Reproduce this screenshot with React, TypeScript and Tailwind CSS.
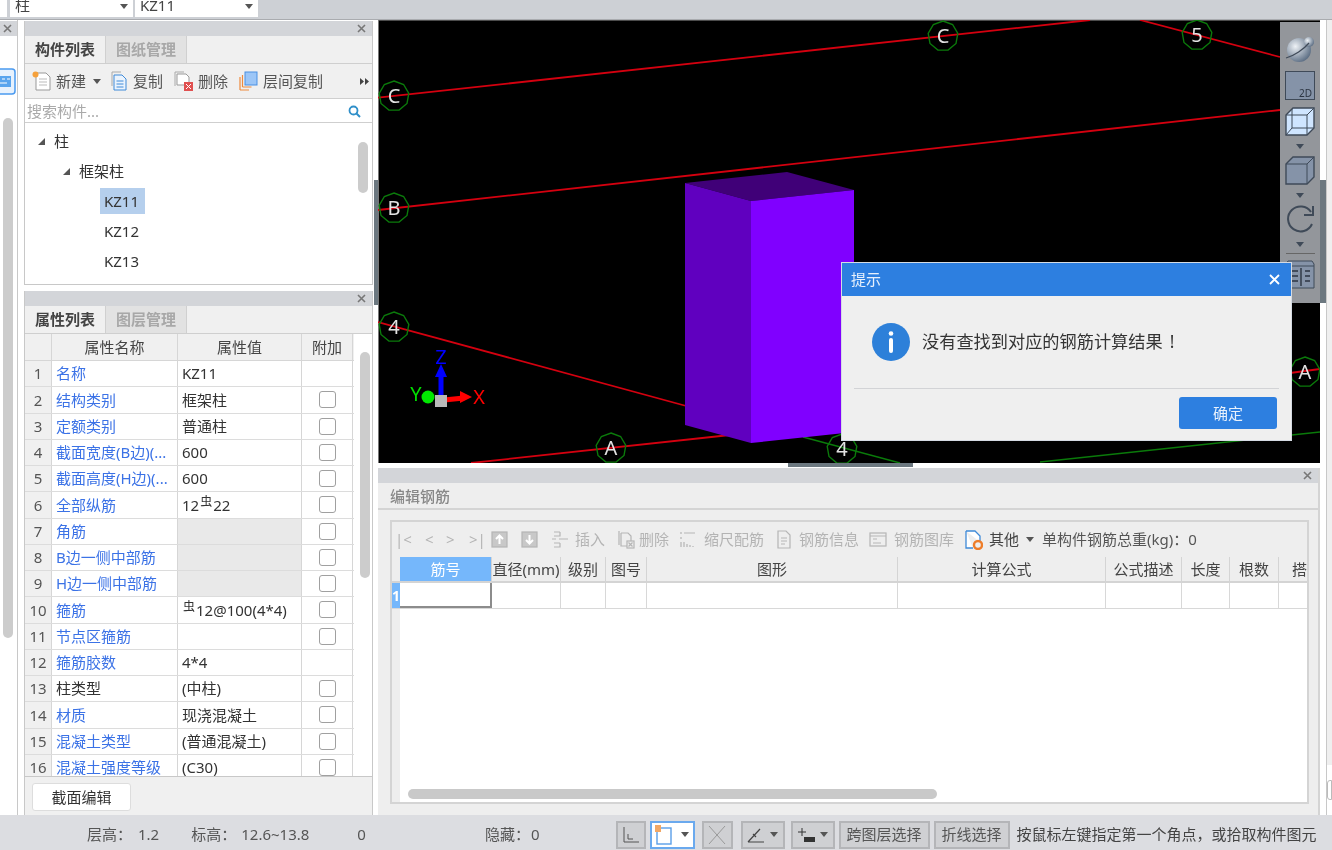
import type React from "react"

const fontStack = "[font-family:'Noto_Sans','Noto_Sans_CJK_SC',sans-serif]"

const Caret = ({ className = "" }: { className?: string }) => (
    <svg width="8" height="5" viewBox="0 0 8 5" className={className}><path d="M0 0h8L4 5z" fill="#555" /></svg>
)

const CloseBar = ({ className = "" }: { className?: string }) => (
    <div className={`h-[15px] bg-[#d3d5d9] flex items-center justify-end shrink-0 ${className}`}>
        <svg width="9" height="9" viewBox="0 0 9 9" className="mr-[6px]"><path d="M1 1l7 7M8 1L1 8" stroke="#777" strokeWidth="1.6" /></svg>
    </div>
)

const Tabs = ({ active, other }: { active: string, other: string }) => (
    <div className="h-[28px] flex bg-[#f0f0f0] border-b border-[#cfcfcf] shrink-0 font-bold">
        <div className="w-[80px] flex items-center justify-center text-[#444]">{active}</div>
        <div className="w-[82px] flex items-center justify-center text-[#a8a8a8] bg-[#e2e2e2] border-x border-[#d0d0d0]">{other}</div>
    </div>
)

// icons for the component list toolbar
const NewIcon = () => (
    <svg width="19" height="20" viewBox="0 0 19 20" className="shrink-0">
        <path d="M4 2h10l4 4v13H4z" fill="#fff" stroke="#999" />
        <path d="M7 8h8M7 11h8M7 14h8" stroke="#bbb" />
        <circle cx="3.5" cy="3.5" r="3" fill="#f5a13c" />
    </svg>
)
const CopyIcon = () => (
    <svg width="16" height="20" viewBox="0 0 16 20" className="shrink-0">
        <path d="M1 1h9M1 1v14" stroke="#aaa" fill="none" />
        <path d="M3 4h8l4 4v11H3z" fill="#eaf3fd" stroke="#3f8ad8" />
        <path d="M5.5 10h7M5.5 13h7M5.5 16h7" stroke="#3f8ad8" />
    </svg>
)
const DeleteIcon = () => (
    <svg width="19" height="20" viewBox="0 0 19 20" className="shrink-0">
        <path d="M1 1h9M1 1v14" stroke="#aaa" fill="none" />
        <path d="M3 3h9l3 3v8H3v-11z" fill="#fff" stroke="#999" />
        <rect x="10" y="11" width="9" height="9" fill="#e05050" />
        <path d="M12 13l5 5M17 13l-5 5" stroke="#fff" />
    </svg>
)
const FloorCopyIcon = () => (
    <svg width="19" height="20" viewBox="0 0 19 20" className="shrink-0">
        <path d="M1 19V6M1 19h9M3.5 16V4M3.5 16h9" stroke="#ee8a3c" strokeWidth="1.2" fill="none" />
        <rect x="6" y="1" width="12" height="13" fill="#9cc6f7" stroke="#4a90e2" />
    </svg>
)

const TreeArrow = () => (
    <svg width="7" height="7" viewBox="0 0 7 7" className="shrink-0"><path d="M7 0v7H0z" fill="#555" /></svg>
)

const ComponentPanel = () => (
    <div className="h-[264px] flex flex-col border border-t-0 border-[#c8c8c8] bg-white shrink-0">
        <CloseBar />
        <Tabs active="构件列表" other="图纸管理" />
        <div className="h-[35px] bg-[#f0f0f0] border-b border-[#cfcfcf] flex items-center text-[#555] shrink-0">
            <div className="ml-[7px]"><NewIcon /></div>
            <span className="ml-[5px]">新建</span>
            <Caret className="ml-[7px]" />
            <div className="ml-[10px]"><CopyIcon /></div>
            <span className="ml-[6px]">复制</span>
            <div className="ml-[11px]"><DeleteIcon /></div>
            <span className="ml-[5px]">删除</span>
            <div className="ml-[11px]"><FloorCopyIcon /></div>
            <span className="ml-[5px]">层间复制</span>
            <svg width="9" height="7" viewBox="0 0 9 7" className="ml-[37px]"><path d="M0 0l4 3.5L0 7zM5 0l4 3.5L5 7z" fill="#444" /></svg>
        </div>
        <div className="h-[24px] border-b border-[#cfcfcf] flex items-center justify-between px-[2px] pt-[2px] text-[#aaa] shrink-0">
            <span>搜索构件...</span>
            <svg width="13" height="13" viewBox="0 0 13 13" className="mr-[9px]"><circle cx="5.5" cy="5.5" r="4" fill="none" stroke="#2f8fc9" strokeWidth="1.8" /><path d="M8.5 8.5l3.5 3.5" stroke="#2f8fc9" strokeWidth="2" /></svg>
        </div>
        <div className="flex-1 relative pt-[4px] text-[#333]">
            <div className="h-[29px] flex items-center pl-[13px] gap-[9px]"><TreeArrow />柱</div>
            <div className="h-[30px] flex items-center pl-[38px] gap-[9px]"><TreeArrow />框架柱</div>
            <div className="h-[30px] flex items-center pl-[75px]"><span className="bg-[#b5cfed] w-[45px] h-[26px] flex items-center pl-[4px]">KZ11</span></div>
            <div className="h-[30px] flex items-center pl-[79px]">KZ12</div>
            <div className="h-[30px] flex items-center pl-[79px]">KZ13</div>
            <div className="absolute right-[4px] top-[19px] w-[10px] h-[51px] rounded-full bg-[#cccccc]" />
        </div>
    </div>
)

const Rebar = () => <span className="text-[12px] relative -top-[3px] mx-[1px]">虫</span>

const propRows: { name: string, value: React.ReactNode, black?: boolean, gray?: boolean, noCheck?: boolean }[] = [
    { name: "名称", value: "KZ11", noCheck: true },
    { name: "结构类别", value: "框架柱" },
    { name: "定额类别", value: "普通柱" },
    { name: "截面宽度(B边)(...", value: "600" },
    { name: "截面高度(H边)(...", value: "600" },
    { name: "全部纵筋", value: <>12<Rebar />22</> },
    { name: "角筋", value: "", gray: true },
    { name: "B边一侧中部筋", value: "", gray: true },
    { name: "H边一侧中部筋", value: "", gray: true },
    { name: "箍筋", value: <><Rebar />12@100(4*4)</> },
    { name: "节点区箍筋", value: "" },
    { name: "箍筋胶数", value: "4*4", noCheck: true },
    { name: "柱类型", value: "(中柱)", black: true },
    { name: "材质", value: "现浇混凝土" },
    { name: "混凝土类型", value: "(普通混凝土)" },
    { name: "混凝土强度等级", value: "(C30)" },
]

const PropertyPanel = () => (
    <div className="flex-1 flex flex-col border-x border-[#c8c8c8] min-h-0">
        <CloseBar />
        <Tabs active="属性列表" other="图层管理" />
        <div className="h-[443px] shrink-0 flex bg-white border-b border-[#c8c8c8] overflow-hidden">
            <div className="w-[329px] shrink-0">
                <div className="flex h-[27px] bg-[#f0f0f0] border-b border-[#d6d6d6] text-[#444]">
                    <div className="w-[27px] border-r border-[#d6d6d6]" />
                    <div className="w-[126px] border-r border-[#d6d6d6] flex items-center justify-center">属性名称</div>
                    <div className="w-[124px] border-r border-[#d6d6d6] flex items-center justify-center">属性值</div>
                    <div className="w-[51px] border-r border-[#d6d6d6] flex items-center justify-center">附加</div>
                </div>
                {propRows.map((r, i) => (
                    <div key={r.name} className="flex h-[26.25px] border-b border-[#dcdcdc] items-stretch">
                        <div className="w-[27px] bg-[#f0f0f0] border-r border-[#d6d6d6] flex items-center justify-center text-[#555]">{i + 1}</div>
                        <div className={`w-[126px] border-r border-[#d6d6d6] flex items-center pl-[4px] whitespace-nowrap overflow-hidden ${r.black ? "text-[#333]" : "text-[#3b72e6]"}`}>{r.name}</div>
                        <div className={`w-[124px] border-r border-[#d6d6d6] flex items-center pl-[4px] text-[#333] ${r.gray ? "bg-[#e9e9e9]" : ""}`}>{r.value}</div>
                        <div className="w-[51px] border-r border-[#d6d6d6] flex items-center justify-center">
                            {!r.noCheck && <div className="w-[17px] h-[17px] rounded-[3px] border border-[#a0a0a0] bg-white" />}
                        </div>
                    </div>
                ))}
            </div>
            <div className="flex-1 pt-[18px] pl-[6px]">
                <div className="w-[10px] h-[226px] rounded-full bg-[#cccccc]" />
            </div>
        </div>
        <div className="h-[38px] bg-[#f0f0f0] flex items-center pl-[7px] pt-[2px] shrink-0">
            <button className="w-[99px] h-[28px] bg-white rounded-[3px] border border-[#dddddd] text-[#333]">截面编辑</button>
        </div>
    </div>
)

const LeftStrip = () => (
    <div className="w-[24px] shrink-0 flex bg-white">
        <div className="w-[18px] border-r border-[#c8c8c8] flex flex-col">
            <div className="h-[15px] mt-px bg-[#d3d5d9] flex items-center pl-[3px]">
                <svg width="9" height="9" viewBox="0 0 9 9"><path d="M1 1l7 7M8 1L1 8" stroke="#777" strokeWidth="1.6" /></svg>
            </div>
            <svg width="16" height="27" viewBox="0 0 16 27" className="mt-[32px]">
                <rect x="-6" y="1" width="21" height="25" rx="3" fill="#e8f2fd" stroke="#4a9af0" strokeWidth="1.5" />
                <rect x="-2" y="8" width="13" height="11" fill="#5aa5ee" />
                <path d="M2 11h3M7 11h3M-1 15h8" stroke="#fff" />
            </svg>
            <div className="ml-[3px] mt-[23px] w-[10px] h-[520px] rounded-full bg-[#cccccc]" />
        </div>
    </div>
)

const Hex = ({ x, y, t }: { x: number, y: number, t: string }) => {
    const pts = Array.from({ length: 9 }, (_, i) => {
        const a = (i * 2 * Math.PI) / 9 - Math.PI / 2
        return `${(x + 15 * Math.cos(a)).toFixed(1)},${(y + 15 * Math.sin(a)).toFixed(1)}`
    }).join(" ")
    return (
        <g>
            <polygon points={pts} fill="none" stroke="#0b7a0b" strokeWidth="1.4" />
            <text x={x} y={y + 7} textAnchor="middle" fontSize="20" fill="#e2e2e2">{t}</text>
        </g>
    )
}

const Viewport = () => (
    <svg width="942" height="443" viewBox="378 20 942 443" className="block">
        <rect x="378" y="20" width="942" height="443" fill="#000" />
        <path d="M378 20h942" stroke="#666" strokeWidth="1.5" />
        <path d="M378.5 20v443" stroke="#777" />
        <g stroke="#d4000f" strokeWidth="1.8">
            <line x1="378" y1="97.7" x2="1090" y2="20" />
            <line x1="378" y1="210" x2="1280" y2="110" />
            <line x1="1140" y1="20" x2="1280" y2="57" />
            <line x1="378" y1="322" x2="690" y2="407" />
            <line x1="471" y1="463" x2="730" y2="435" />
            <line x1="1290" y1="373" x2="1320" y2="369" />
        </g>
        <g stroke="#0a7a0a" strokeWidth="1.5">
            <line x1="803" y1="437" x2="900" y2="463" />
            <line x1="1040" y1="462" x2="1320" y2="432" />
        </g>
        <polygon points="685,183 787,172 854,190 751,201" fill="#400078" />
        <polygon points="685,183 751,201 751,443 685,425" fill="#6000bf" />
        <polygon points="751,201 854,190 854,432 751,443" fill="#8000ff" />
        <Hex x={394} y={96} t="C" />
        <Hex x={394} y={208} t="B" />
        <Hex x={394} y={327} t="4" />
        <Hex x={943} y={36} t="C" />
        <Hex x={1197} y={35} t="5" />
        <Hex x={611} y={448} t="A" />
        <Hex x={842} y={449} t="4" />
        <Hex x={1305} y={372} t="A" />
        {/* axis gizmo */}
        <path d="M441 397v-20" stroke="#0000ff" strokeWidth="5" />
        <path d="M441 364l6 13h-12z" fill="#0000ff" />
        <text x="441" y="364" textAnchor="middle" fontSize="20" fill="#0000ff">Z</text>
        <path d="M444 400l20-2" stroke="#ff0000" strokeWidth="5" />
        <path d="M472 397l-12-6v12z" fill="#ff0000" />
        <text x="479" y="404" textAnchor="middle" fontSize="20" fill="#ff0000">X</text>
        <circle cx="428" cy="397" r="6.5" fill="#00e800" />
        <text x="416" y="401" textAnchor="middle" fontSize="20" fill="#00e000">Y</text>
        <rect x="435" y="395" width="12" height="12" fill="#b8b8b8" />
    </svg>
)

const ViewCaret = () => (
    <div className="h-[20px] flex items-center justify-center shrink-0">
        <svg width="10" height="5" viewBox="0 0 10 5"><path d="M1 0h8L5 5z" fill="#3f4a58" /></svg>
    </div>
)

const ViewToolbar = () => (
    <div className="absolute right-0 top-[2px] w-[40px] h-[281px] bg-[#93969b] flex flex-col items-center pt-[12px]">
        <svg width="32" height="30" viewBox="0 0 32 30" className="shrink-0">
            <defs>
                <radialGradient id="ball" cx="35%" cy="35%" r="70%"><stop offset="0%" stopColor="#eef2f6" /><stop offset="100%" stopColor="#5c6e84" /></radialGradient>
            </defs>
            <circle cx="15" cy="16" r="12" fill="url(#ball)" />
            <circle cx="25" cy="8" r="5" fill="url(#ball)" />
            <path d="M2 24C10 22 20 15 25 9" stroke="#3f4a58" strokeWidth="1.2" fill="none" />
        </svg>
        <div className="mt-[7px] w-[30px] h-[29px] bg-[#8593a8] border border-[#3f4a58] flex items-end justify-end pr-[2px] text-[10px] leading-[12px] text-[#2c3542] shrink-0">2D</div>
        <svg width="30" height="29" viewBox="0 0 30 29" className="mt-[7px] shrink-0">
            <path d="M1 8l7-7h21v20l-7 7H1z" fill="#cfe5ff" stroke="#3f4a58" strokeWidth="1.4" />
            <path d="M7 2v19h22M7 21l-6 7M1 8h21v20M22 8l7-7" stroke="#3f4a58" fill="none" />
        </svg>
        <ViewCaret />
        <svg width="30" height="29" viewBox="0 0 30 29" className="shrink-0">
            <path d="M1 8l7-7h21v20l-7 7H1z" fill="#8593a8" stroke="#3f4a58" strokeWidth="1.4" />
            <path d="M1 8h21v20M22 8l7-7" stroke="#3f4a58" fill="none" />
        </svg>
        <ViewCaret />
        <svg width="30" height="29" viewBox="0 0 30 29" className="shrink-0">
            <path d="M26 7A12.5 12.5 0 1 0 27 19" stroke="#3f4a58" strokeWidth="2" fill="none" />
            <path d="M28 1v9h-9" stroke="#3f4a58" strokeWidth="2" fill="none" />
        </svg>
        <ViewCaret />
        <div className="w-[29px] h-px bg-[#666] -mt-px shrink-0" />
        <svg width="30" height="29" viewBox="0 0 30 29" className="mt-[6px] shrink-0">
            <path d="M1 4l2-3h24l2 3v24H1z" fill="#8593a8" stroke="#3f4a58" />
            <path d="M1 6h28" stroke="#3f4a58" />
            <path d="M16 8v18M7 11h6M7 16h6M7 21h6M20 11h5M20 16h5M20 21h5" stroke="#2c3542" strokeWidth="1.4" />
        </svg>
    </div>
)

// rebar editor columns, widths taken from the header separators
const columns = [
    { title: "筋号", w: "w-[92px]" },
    { title: "直径(mm)", w: "w-[69px]" },
    { title: "级别", w: "w-[45px]" },
    { title: "图号", w: "w-[41px]" },
    { title: "图形", w: "w-[251px]" },
    { title: "计算公式", w: "w-[208px]" },
    { title: "公式描述", w: "w-[76px]" },
    { title: "长度", w: "w-[48px]" },
    { title: "根数", w: "w-[49px]" },
    { title: "搭", w: "w-[28px]" },
]

const GrayDoc = ({ children }: { children: React.ReactNode }) => (
    <svg width="18" height="19" viewBox="0 0 18 19" className="shrink-0" fill="none" stroke="#b5b5b5" strokeWidth="1.2">{children}</svg>
)

const RebarEditor = () => (
    <div className="flex-1 bg-[#eeeeee] flex flex-col min-h-0 border-r-2 border-[#d4d4d4]">
        <CloseBar />
        <div className="h-[27px] border-b-2 border-[#d4d4d4] flex items-center pl-[12px] pt-[2px] text-[#888] font-medium shrink-0">编辑钢筋</div>
        <div className="mt-[10px] ml-[12px] mr-[9px] h-[284px] border-2 border-[#d4d4d4] flex flex-col bg-white shrink-0">
            <div className="h-[35px] bg-[#eeeeee] flex items-center text-[#b4b4b4] whitespace-nowrap shrink-0">
                <span className="ml-[3px] w-[30px]">|&lt;</span>
                <span className="w-[21px]">&lt;</span>
                <span className="w-[23px]">&gt;</span>
                <span className="w-[22px]">&gt;|</span>
                <GrayDoc><rect x="1" y="2" width="15" height="15" fill="#c8c8c8" stroke="#b5b5b5" /><path d="M8.5 14V6M5 9l3.5-3.5L12 9" stroke="#fff" strokeWidth="2" /></GrayDoc>
                <div className="ml-[12px]"><GrayDoc><rect x="1" y="2" width="15" height="15" fill="#c8c8c8" stroke="#b5b5b5" /><path d="M8.5 5v8M5 10l3.5 3.5L12 10" stroke="#fff" strokeWidth="2" /></GrayDoc></div>
                <div className="ml-[12px]"><GrayDoc><path d="M3 2h6M9 2v4H3M3 13h6M9 13v4H3M1 9h4M8 9h9" /></GrayDoc></div>
                <span className="ml-[6px]">插入</span>
                <div className="ml-[12px]"><GrayDoc><path d="M2 1v14M4 3h7l3 3v5M4 3v13h6" /><rect x="10" y="11" width="7" height="7" /><path d="M11.5 12.5l4 4M15.5 12.5l-4 4" /></GrayDoc></div>
                <span className="ml-[4px]">删除</span>
                <div className="ml-[11px]"><GrayDoc><path d="M1 2v2M1 7v2M1 12v5M4 3h11M4 12v5M7 14v3M10 15v2M13 16v1" /></GrayDoc></div>
                <span className="ml-[6px]">缩尺配筋</span>
                <div className="ml-[11px]"><GrayDoc><path d="M3 1h8l4 4v13H3zM6 8h6M6 11h6M6 14h4" /></GrayDoc></div>
                <span className="ml-[6px]">钢筋信息</span>
                <div className="ml-[10px]"><GrayDoc><rect x="1" y="3" width="16" height="13" /><path d="M1 6h16M4 9h4M4 13h8" /></GrayDoc></div>
                <span className="ml-[7px]">钢筋图库</span>
                <svg width="18" height="20" viewBox="0 0 18 20" className="ml-[11px] shrink-0">
                    <path d="M1 1h9l5 5v6M1 1v17h7" fill="#fff" stroke="#3f8ad8" strokeWidth="1.3" />
                    <circle cx="13" cy="15" r="4" fill="none" stroke="#ee7d2a" strokeWidth="2.4" />
                </svg>
                <span className="ml-[6px] text-[#444]">其他</span>
                <Caret className="ml-[7px]" />
                <span className="ml-[8px] text-[#555]">单构件钢筋总重(kg)：0</span>
            </div>
            <div className="h-[26px] flex bg-[#eeeeee] border-b-2 border-[#d4d4d4] shrink-0 text-[#444]">
                <div className="w-[8px] shrink-0" />
                {columns.map((c, i) => (
                    <div key={c.title} className={`${c.w} shrink-0 flex items-center whitespace-nowrap ${i === 0 ? "bg-[#75b7fb] text-white justify-center border-r border-[#d4d4d4]" : i === 9 ? "pl-[13px]" : "justify-center border-r border-[#d4d4d4]"}`}>{c.title}</div>
                ))}
            </div>
            <div className="h-[26px] flex border-b border-[#d8d8d8] shrink-0">
                <div className="w-[8px] bg-[#75b7fb] text-white font-bold flex items-center justify-center shrink-0 text-[14px]">1</div>
                {columns.map((c, i) => (
                    <div key={c.title} className={`${c.w} shrink-0 ${i === 0 ? "border-r-2 border-b-2 border-[#8c8c8c]" : i === 9 ? "" : "border-r border-[#d8d8d8]"}`} />
                ))}
            </div>
            <div className="flex-1 flex relative">
                <div className="w-[8px] bg-[#eeeeee]" />
                <div className="absolute left-[16px] bottom-[3px] w-[529px] h-[10px] rounded-full bg-[#c9c9c9]" />
            </div>
        </div>
    </div>
)

const StatusBtn = ({ w, className = "", children }: { w: string, className?: string, children: React.ReactNode }) => (
    <div className={`${w} h-[28px] shrink-0 bg-[#cfd0d3] border-2 border-[#b4b5b8] flex items-center justify-center whitespace-nowrap text-[#555] ${className}`}>{children}</div>
)

const StatusBar = () => (
    <div className="h-[35px] bg-[#dcdde1] flex items-center pt-[4px] shrink-0 text-[#555] whitespace-nowrap">
        <span className="ml-[87px]">层高：</span>
        <span className="ml-[6px]">1.2</span>
        <span className="ml-[32px]">标高：</span>
        <span className="ml-[5px]">12.6~13.8</span>
        <span className="ml-[48px]">0</span>
        <span className="ml-[119px]">隐藏：</span>
        <span className="ml-[1px]">0</span>
        <StatusBtn w="w-[30px]" className="ml-[76px]">
            <svg width="18" height="18" viewBox="0 0 18 18"><path d="M2 1v15h15M6 8v5h5" stroke="#555" fill="none" /></svg>
        </StatusBtn>
        <StatusBtn w="w-[45px]" className="ml-[4px] !bg-white !border-[#6aa9ee]">
            <svg width="18" height="20" viewBox="0 0 18 20"><rect x="2" y="3" width="14" height="16" fill="#fff" stroke="#5a9fe8" strokeWidth="1.4" /><rect x="0" y="0" width="6" height="7" fill="#f2a765" /></svg>
            <Caret className="ml-[8px]" />
        </StatusBtn>
        <StatusBtn w="w-[31px]" className="ml-[7px]">
            <svg width="18" height="20" viewBox="0 0 18 20"><path d="M1 1l16 18M17 1L1 19" stroke="#999" fill="none" /></svg>
        </StatusBtn>
        <StatusBtn w="w-[44px]" className="ml-[8px]">
            <svg width="18" height="18" viewBox="0 0 18 18"><path d="M1 16h16M1 16L13 3M6 8l3 3" stroke="#444" strokeWidth="1.2" fill="none" /></svg>
            <Caret className="ml-[5px]" />
        </StatusBtn>
        <StatusBtn w="w-[44px]" className="ml-[6px]">
            <svg width="20" height="18" viewBox="0 0 20 18"><path d="M5 2v8M1 6h8" stroke="#333" /><rect x="7" y="11" width="11" height="5" fill="#333" /></svg>
            <Caret className="ml-[3px]" />
        </StatusBtn>
        <StatusBtn w="w-[91px]" className="ml-[4px]">跨图层选择</StatusBtn>
        <StatusBtn w="w-[76px]" className="ml-[4px]">折线选择</StatusBtn>
        <span className="ml-[7px] text-[#444]">按鼠标左键指定第一个角点，或拾取构件图元</span>
    </div>
)

const Dialog = () => (
    <div className="absolute left-[841px] top-[262px] w-[451px] h-[179px] bg-[#efefef] border border-[#d5dbe3] flex flex-col">
        <div className="h-[33px] bg-[#2d7fe0] flex items-center justify-between pl-[9px] pr-[11px] text-[#e8f1fc] shrink-0">
            <span>提示</span>
            <svg width="11" height="11" viewBox="0 0 11 11"><path d="M1 1l9 9M10 1l-9 9" stroke="#fff" strokeWidth="1.8" /></svg>
        </div>
        <div className="h-[93px] flex items-center pl-[18px] gap-[12px] mx-[12px] border-b border-[#d2d3d6] shrink-0 pb-[1px]">
            <svg width="38" height="38" viewBox="0 0 38 38" className="shrink-0">
                <circle cx="19" cy="19" r="19" fill="#2d80d9" />
                <circle cx="19" cy="10.5" r="2.3" fill="#fff" />
                <rect x="17" y="15" width="4" height="15" rx="2" fill="#fff" />
            </svg>
            <span className="text-[17.2px] text-[#333] whitespace-nowrap">没有查找到对应的钢筋计算结果<span className="ml-[7px]">!</span></span>
        </div>
        <div className="flex justify-end pr-[14px] pt-[8px]">
            <button className="w-[98px] h-[32px] rounded-[3px] bg-[#2d7fe0] text-[#e8f1fc]">确定</button>
        </div>
    </div>
)

export default function App() {
    return (
        <div className={`relative w-[1332px] h-[850px] overflow-hidden flex flex-col bg-white text-[15px] blur-[0.35px] ${fontStack}`}>
            <div className="h-[20px] bg-[#cdd0d5] flex gap-[2px] shrink-0 border-b border-[#a9abaf] text-[#444]">
                <div className="w-[7px] h-[17px] bg-white" />
                <div className="ml-[1px] w-[123px] h-[17px] bg-white flex justify-between px-[5px] overflow-hidden"><span className="-mt-[6px]">柱</span><Caret className="mt-[4px]" /></div>
                <div className="w-[123px] h-[17px] bg-white flex justify-between px-[5px] overflow-hidden"><span className="-mt-[6px]">KZ11</span><Caret className="mt-[4px]" /></div>
            </div>
            <div className="flex-1 flex min-h-0">
                <LeftStrip />
                <div className="w-[349px] shrink-0 flex flex-col gap-[6px]">
                    <div className="h-px -mb-[6px]" />
                    <ComponentPanel />
                    <PropertyPanel />
                </div>
                <div className="w-[5px] shrink-0 flex flex-col pt-[160px]">
                    <div className="ml-px h-[125px] bg-[#6c7880]" />
                </div>
                <div className="w-[942px] shrink-0 flex flex-col relative">
                    <Viewport />
                    <ViewToolbar />
                    <div className="h-[5px] bg-white shrink-0 flex">
                        <div className="ml-[410px] w-[125px] h-[4px] bg-[#6c7880]" />
                    </div>
                    <RebarEditor />
                </div>
                <div className="flex-1 flex">
                    <div className="w-[6px] bg-white pt-[160px]"><div className="h-[123px] bg-[#6c7880]" /></div>
                    <div className="flex-1 flex flex-col bg-[#efefef] border-l border-[#c8c8c8]">
                        <div className="h-[745px]" />
                        <div className="flex-1 bg-white pt-[15px]"><div className="h-[20px] border border-[#bbbbbb] rounded-l-[3px]" /></div>
                    </div>
                </div>
            </div>
            <StatusBar />
            <Dialog />
        </div>
    )
}
